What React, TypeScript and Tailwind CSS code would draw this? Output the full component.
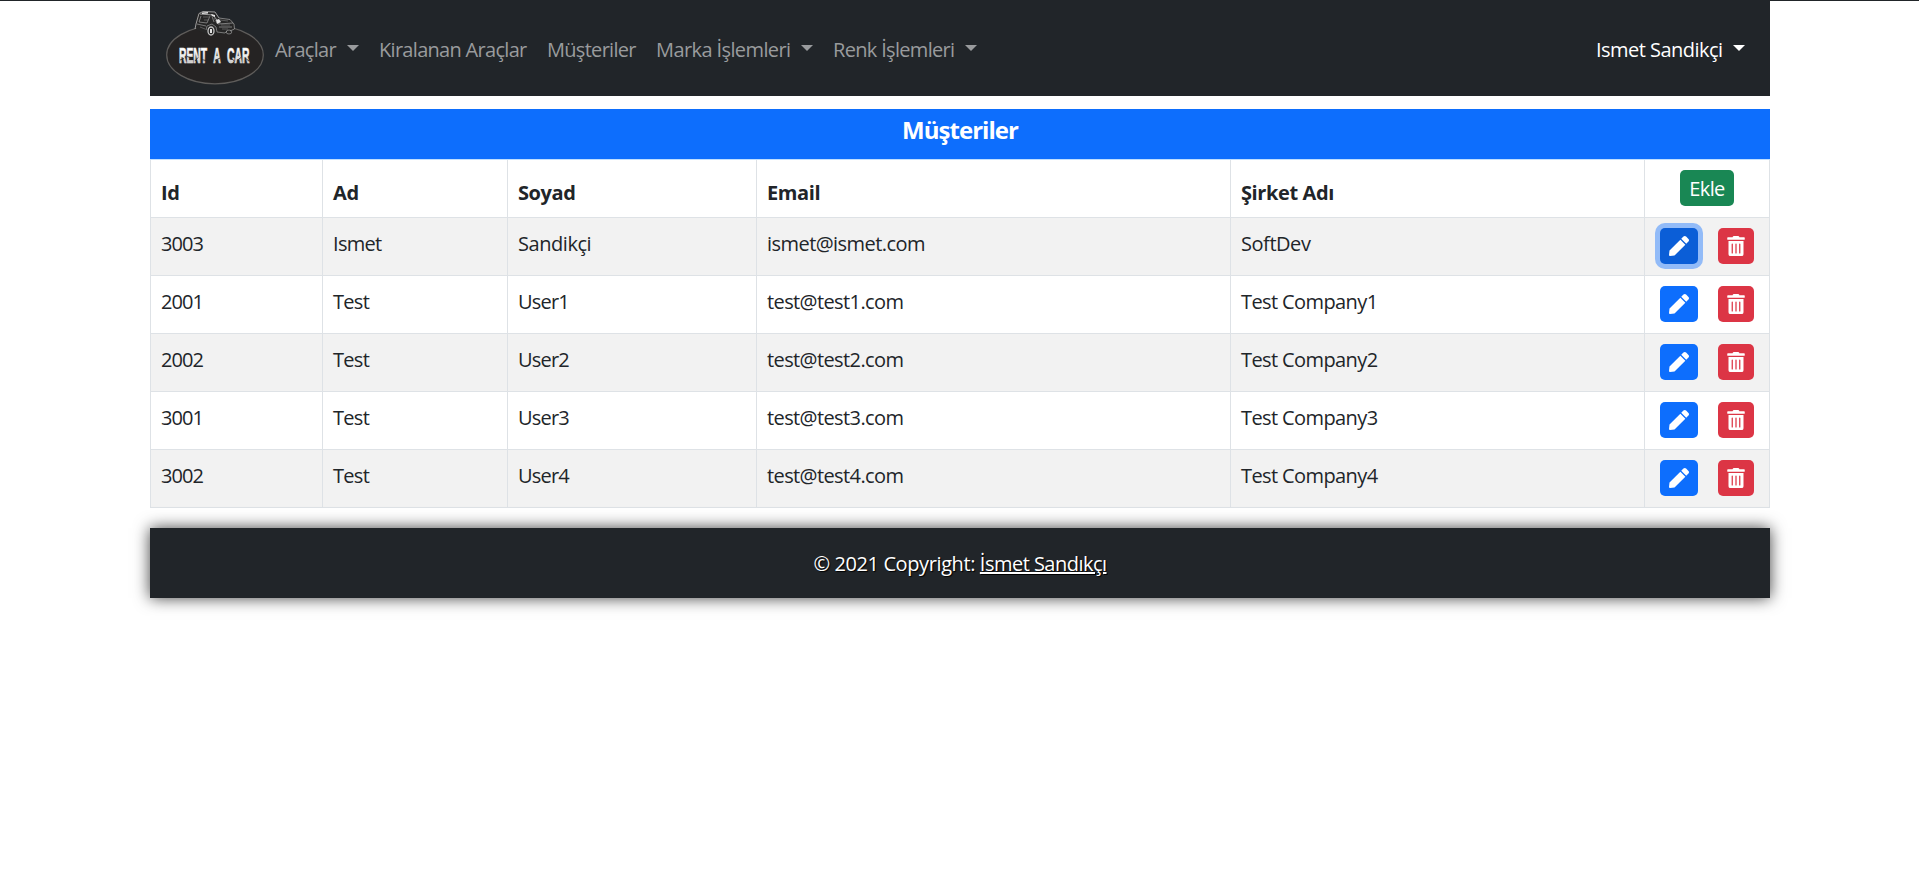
import { FaPen, FaTrashAlt } from "react-icons/fa";

type Cell = { text: string; tracking: string };
type Customer = {
  id: string;
  name: string;
  surname: Cell;
  email: Cell;
  company: Cell;
  editing?: boolean;
};

const customers: Customer[] = [
  {
    id: "3003",
    name: "Ismet",
    surname: { text: "Sandikçi", tracking: "tracking-[-0.45px]" },
    email: { text: "ismet@ismet.com", tracking: "tracking-[-0.55px]" },
    company: { text: "SoftDev", tracking: "tracking-[-0.45px]" },
    editing: true,
  },
  ...[
    ["2001", "1"],
    ["2002", "2"],
    ["3001", "3"],
    ["3002", "4"],
  ].map(([id, n]) => ({
    id,
    name: "Test",
    surname: { text: `User${n}`, tracking: "tracking-[-0.8px]" },
    email: { text: `test@test${n}.com`, tracking: "tracking-[-0.6px]" },
    company: { text: `Test Company${n}`, tracking: "tracking-[-0.6px]" },
  })),
];

const Caret = () => (
  <span className="-mt-[5px] h-0 w-0 border-x-[6px] border-t-[6px] border-x-transparent border-t-current" />
);

function Logo() {
  return (
    <svg className="block h-[86px] w-[106px] shrink-0" viewBox="0 0 106 86">
      <defs>
        <linearGradient id="lettering" x1="0" y1="0" x2="0" y2="1">
          <stop offset="0.4" stopColor="#ffffff" />
          <stop offset="0.85" stopColor="#c4c2c1" />
        </linearGradient>
      </defs>
      <ellipse cx="53" cy="51" rx="48.3" ry="28.8" fill="#252323" stroke="#5f5d5b" strokeWidth="1.2" />
      <path d="M33 22 35 10 39 7.5 53 8 57 14 69 16 73 21 72 27 62 30 45 30 35 26Z" fill="#262626" />
      <g fill="none" stroke="#a9a9a9" strokeWidth="0.9">
        <path d="M37 9.5 41 7.5 53 8 57 14M37 9.5 34 20 33 25M38 10 51 11 55 16" />
        <path d="M39 12 37 18 45 19 48 12M50 12.5 52 18M35 20 44 22" strokeOpacity="0.7" />
        <path d="M57 14 68 15.5 72 20 72.5 25 68 27M56 20 71 19M57 23 70 23" strokeOpacity="0.75" />
        <path d="M44 26 45 22 50 20 54 23 55 28 63 29 65 27" strokeOpacity="0.7" />
        <path d="M41 13 47 13M42 16 46 16M52 14 55 19M58 16 66 17M59 21 68 21M60 25 66 25M38 23 43 25" strokeOpacity="0.45" />
        <ellipse cx="49" cy="27" rx="3" ry="4" stroke="#c4c4c4" strokeWidth="1.3" />
        <ellipse cx="67" cy="28" rx="2.8" ry="2" strokeOpacity="0.7" />
      </g>
      <path d="M40 8.5 46 8 46 9.5 40 10ZM54 16l3-1 2 3-4 2ZM49 10l4 1 0 2-3-1ZM48 25l2 0 0 4-2 0Z" fill="#e2e2e2" />
      <text
        transform="translate(17 58.5) scale(0.47 1)"
        fill="url(#lettering)"
        stroke="#e8e6e5"
        strokeWidth="0.7"
        fontFamily="'Liberation Sans', sans-serif"
        fontWeight="700"
        fontSize="22"
        wordSpacing="8"
      >
        RENT A CAR
      </text>
      <path
        d="M18 56 22 54.5M25 52.5 30 54M33 57 36 53.5M39 55.5 44 56.5M53 56.5 58 54M68 54 72 56.5M75 56.5 79 53.5M83 54 87 57"
        stroke="#252323"
        strokeWidth="0.8"
        fill="none"
      />
    </svg>
  );
}

const th = "border-b border-l border-[#dee2e6] p-0 px-2.5 pb-[9px] align-bottom text-left font-bold tracking-[-0.4px]";
const td = "border-b border-l border-[#dee2e6] p-0 px-2.5 pt-[11px] align-top";

export default function App() {
  return (
    <div className="min-h-[878px] bg-white font-['Open_Sans','Noto_Sans',sans-serif] text-[20px] leading-[30px] text-[#212529]">
      <div className="h-px bg-[#212529]" />
      <div className="ml-[150px] w-[1620px]">
        <nav className="flex h-[95px] items-start bg-[#212529] pl-3 pt-[3px] text-[#999b9d]">
          <Logo />
          <div className="flex grow items-start gap-5 whitespace-nowrap pl-[7px] pt-[31px]">
            <a className="flex w-[84px] items-center justify-between tracking-[-0.7px]">
              Araçlar <Caret />
            </a>
            <a className="w-[148px] tracking-[-0.7px]">Kiralanan Araçlar</a>
            <a className="w-[89px] tracking-[-0.7px]">Müşteriler</a>
            <a className="flex w-[157px] items-center justify-between tracking-[-0.6px]">
              Marka İşlemleri <Caret />
            </a>
            <a className="flex w-[144px] items-center justify-between tracking-[-0.68px]">
              Renk İşlemleri <Caret />
            </a>
            <a className="ml-auto mr-[25px] flex w-[149px] items-center justify-between tracking-[-0.53px] text-white">
              Ismet Sandikçi <Caret />
            </a>
          </div>
        </nav>

        <h5 className="mt-[13px] h-[51px] border-b border-[#bfdfff] bg-[#0d6efd] pt-[6px] text-center text-[24px] font-bold tracking-[-0.95px] text-white">
          Müşteriler
        </h5>

        <table className="w-full table-fixed border-separate border-spacing-0 border-r border-[#dee2e6]">
          <colgroup>
            <col className="w-[172px]" />
            <col className="w-[185px]" />
            <col className="w-[249px]" />
            <col className="w-[474px]" />
            <col className="w-[414px]" />
            <col className="w-[125px]" />
          </colgroup>
          <thead>
            <tr className="h-[58px]">
              <th className={th}>Id</th>
              <th className={th}>Ad</th>
              <th className={th}>Soyad</th>
              <th className={th}>Email</th>
              <th className={th}>Şirket Adı</th>
              <th className="border-b border-l border-[#dee2e6] p-0 pt-2.5 text-center align-top font-normal">
                <button className="mx-auto block h-9 w-[54px] rounded-[5px] bg-[#198754] pt-0.5 tracking-[-0.6px] text-white">
                  Ekle
                </button>
              </th>
            </tr>
          </thead>
          <tbody>
            {customers.map((c) => (
              <tr key={c.id} className="h-[58px] odd:bg-[#f2f2f2]">
                <td className={`${td} tracking-[-0.95px]`}>{c.id}</td>
                <td className={`${td} tracking-[-0.7px]`}>{c.name}</td>
                <td className={`${td} ${c.surname.tracking}`}>{c.surname.text}</td>
                <td className={`${td} ${c.email.tracking}`}>{c.email.text}</td>
                <td className={`${td} ${c.company.tracking}`}>{c.company.text}</td>
                <td className="border-b border-l border-[#dee2e6] p-0 pl-[15px] pt-2.5 align-top">
                  <div className="flex gap-5 text-white">
                    <button
                      className={`flex h-9 w-[38px] items-center justify-center rounded-[5px] ${
                        c.editing ? "bg-[#0b5ed7] shadow-[0_0_0_5px_rgba(49,132,253,0.5)]" : "bg-[#0d6efd]"
                      }`}
                    >
                      <FaPen className="h-5 w-5" />
                    </button>
                    <button className="flex h-9 w-9 items-center justify-center rounded-[5px] bg-[#dc3545]">
                      <FaTrashAlt className="h-5 w-[18px]" />
                    </button>
                  </div>
                </td>
              </tr>
            ))}
          </tbody>
        </table>

        <footer className="mt-5 h-[70px] whitespace-nowrap bg-[#212529] pt-[21px] text-center tracking-[-0.4px] text-white shadow-[0_0_15px_rgba(0,0,0,0.75)] [text-shadow:1px_1px_1px_#000]">
          © 2021 Copyright: <a className="tracking-[-0.52px] underline decoration-2 underline-offset-1">İsmet Sandıkçı</a>
        </footer>
      </div>
    </div>
  );
}
